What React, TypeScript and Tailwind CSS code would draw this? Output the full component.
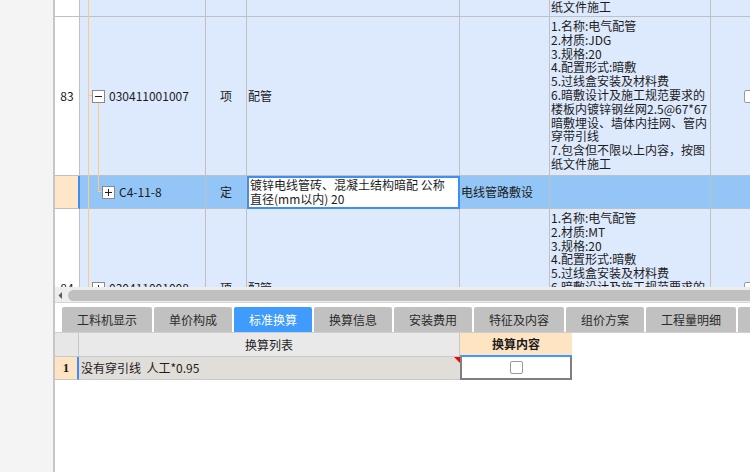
import React from 'react';

const line = 'border-[#c0c0c0]';

function TreeBox({ plus }: { plus?: boolean }) {
  return (
    <span className="relative w-[13px] h-[13px] shrink-0 border border-[#8a8a8a] bg-white">
      <span className="absolute left-[2px] right-[2px] top-[5px] h-px bg-[#222]" />
      {plus && <span className="absolute top-[2px] bottom-[2px] left-[5px] w-px bg-[#222]" />}
    </span>
  );
}

function Check() {
  return <span className="w-[13px] h-[13px] shrink-0 border border-[#9a9a9a] rounded-[2px] bg-white" />;
}

const row83 = [
  '1.名称:电气配管',
  '2.材质:JDG',
  '3.规格:20',
  '4.配置形式:暗敷',
  '5.过线盒安装及材料费',
  '6.暗敷设计及施工规范要求的',
  '楼板内镀锌钢丝网2.5@67*67',
  '暗敷埋设、墙体内挂网、管内',
  '穿带引线',
  '7.包含但不限以上内容，按图',
  '纸文件施工',
];

// only the part above the scrollbar is visible
const row84 = [
  '1.名称:电气配管',
  '2.材质:MT',
  '3.规格:20',
  '4.配置形式:暗敷',
  '5.过线盒安装及材料费',
  '6.暗敷设计及施工规范要求的',
];

const tabs = [
  { name: '工料机显示', w: 'w-[90px]' },
  { name: '单价构成', w: 'w-[78px]' },
  { name: '标准换算', w: 'w-[78px]', active: true },
  { name: '换算信息', w: 'w-[78px]' },
  { name: '安装费用', w: 'w-[78px]' },
  { name: '特征及内容', w: 'w-[90px]' },
  { name: '组价方案', w: 'w-[78px]' },
  { name: '工程量明细', w: 'w-[90px]' },
  { name: '', w: 'w-[40px]' },
];

function Features({ lines }: { lines: string[] }) {
  return (
    <div className="pl-[1px] pt-[2px] leading-[13.8px] whitespace-nowrap overflow-hidden">
      {lines.map((l, i) => (
        <div key={i}>{l}</div>
      ))}
    </div>
  );
}

export default function App() {
  const cell = `border-r border-b ${line}`;
  return (
    <div className="w-[750px] h-[472px] flex bg-white overflow-hidden text-[12px] text-[#1c1c1c] font-['Noto_Sans_CJK_SC','Liberation_Sans',sans-serif]">
      <div className="w-[55px] shrink-0 bg-[#f4f4f4] border-r-2 border-[#c6c6c6]" />

      <div className="flex-1 min-w-0 flex flex-col">
        {/* top grid */}
        <div className="h-[287px] overflow-hidden">
          <div className="grid grid-cols-[25px_126px_41px_213px_90px_161px_1fr] grid-rows-[17px_159px_33px_159px] bg-[#dde9fd]">
            {/* row 82 (tail) */}
            <div className={`bg-white ${cell}`} />
            <div className={`relative ${cell}`}>
              <span className="absolute left-[8px] top-0 bottom-[-1px] w-px bg-[#ffc97f]" />
            </div>
            <div className={cell} />
            <div className={cell} />
            <div className={cell} />
            <div className={`flex items-end pl-[1px] pb-[2px] leading-[13.8px] overflow-hidden ${cell}`}>纸文件施工</div>
            <div className={cell} />

            {/* row 83 */}
            <div className={`bg-white flex items-center justify-center ${cell}`}>83</div>
            <div className={`relative flex items-center pl-[12px] ${cell}`}>
              <span className="absolute left-[8px] top-0 bottom-[-1px] w-px bg-[#ffc97f]" />
              <span className="absolute left-[8px] w-[4px] top-[78px] h-px bg-[#ffc97f]" />
              <span className="absolute left-[18px] top-[85px] bottom-[-1px] w-px bg-[#ffc97f]" />
              <TreeBox />
              <span className="ml-[4px]">030411001007</span>
            </div>
            <div className={`flex items-center justify-center ${cell}`}>项</div>
            <div className={`flex items-center pl-[1px] ${cell}`}>配管</div>
            <div className={cell} />
            <div className={cell}>
              <Features lines={row83} />
            </div>
            <div className={`flex items-center pl-[33px] ${cell}`}>
              <Check />
            </div>

            {/* row C4-11-8 (selected) */}
            <div className={`bg-[#ffe6c8] border-b ${line} border-r-2 border-r-[#3b8cf3]`} />
            <div className={`relative flex items-center pl-[22px] bg-[#93c6f6] ${cell}`}>
              <span className="absolute left-[8px] top-0 bottom-[-1px] w-px bg-[#ffc97f]" />
              <span className="absolute left-[18px] top-0 h-[15px] w-px bg-[#ffc97f]" />
              <span className="absolute left-[18px] top-[15px] w-[4px] h-px bg-[#ffc97f]" />
              <TreeBox plus />
              <span className="ml-[4px]">C4-11-8</span>
            </div>
            <div className={`flex items-center justify-center bg-[#93c6f6] ${cell}`}>定</div>
            <div className="bg-white border-2 border-[#3d8ef5] pl-[1px] leading-[14px] whitespace-nowrap overflow-hidden">
              <div>镀锌电线管砖、混凝土结构暗配 公称</div>
              <div>直径(mm以内) 20</div>
            </div>
            <div className={`flex items-center pl-[1px] bg-[#93c6f6] whitespace-nowrap ${cell}`}>电线管路敷设</div>
            <div className={`bg-[#93c6f6] ${cell}`} />
            <div className={`bg-[#93c6f6] ${cell}`} />

            {/* row 84 */}
            <div className={`bg-white flex items-center justify-center ${cell}`}>84</div>
            <div className={`relative flex items-center pl-[12px] ${cell}`}>
              <span className="absolute left-[8px] top-0 h-[79px] w-px bg-[#ffc97f]" />
              <span className="absolute left-[8px] w-[4px] top-[79px] h-px bg-[#ffc97f]" />
              <TreeBox plus />
              <span className="ml-[4px]">030411001008</span>
            </div>
            <div className={`flex items-center justify-center ${cell}`}>项</div>
            <div className={`flex items-center pl-[1px] ${cell}`}>配管</div>
            <div className={cell} />
            <div className={cell}>
              <Features lines={row84} />
            </div>
            <div className={`flex items-center pl-[33px] ${cell}`}>
              <Check />
            </div>
          </div>
        </div>

        {/* horizontal scrollbar */}
        <div className="h-[16px] bg-[#ededed] flex items-start pt-[3px] border-b border-[#d6d6d6]">
          <svg width="13" height="11" viewBox="0 0 13 11" className="shrink-0">
            <path d="M7 2 L3.5 5.5 L7 9 Z" fill="#5a5a5a" />
          </svg>
          <div className="flex-1 h-[11px] rounded-full bg-[#c0c0c0] -mr-[20px]" />
        </div>

        {/* tabs */}
        <div className="flex gap-[2px] pl-[7px] pt-[4px] bg-white border-b border-[#cfcfcf] whitespace-nowrap overflow-hidden">
          {tabs.map((t, i) => (
            <div
              key={i}
              className={`${t.w} h-[25px] shrink-0 rounded-t-[2px] flex items-center justify-center text-[12px] leading-[14px] ${
                t.active ? 'bg-[#3f9bfd] text-white' : 'bg-[#c1c1c1] text-[#2b2b2b]'
              }`}
            >
              {t.name}
            </div>
          ))}
        </div>

        {/* standard conversion grid */}
        <div className="grid grid-cols-[24px_381px_112px] grid-rows-[24px_23px]">
          <div className="bg-[#e7e7e7] border-r border-b border-[#c8c8c8]" />
          <div className="bg-[#e9e9e9] border-r border-b border-[#c8c8c8] flex items-center justify-center">换算列表</div>
          <div className="bg-[#ffe4c4] border-b-2 border-[#3d9bff] flex items-center justify-center font-bold">换算内容</div>

          <div className="bg-[#ffe4c4] border-b border-[#c8c8c8] border-r-2 border-r-[#3d8ef5] flex items-center justify-center font-bold font-['Liberation_Serif',serif] text-[13px]">
            1
          </div>
          <div className="relative bg-[#e1ddd9] border-b border-[#c8c8c8] flex items-center pl-[2px] whitespace-nowrap">
            没有穿引线&nbsp;&nbsp;人工*0.95
            <span className="absolute right-0 top-0 w-0 h-0 border-t-[6px] border-l-[6px] border-t-[#ff0000] border-l-transparent" />
          </div>
          <div className="bg-white border-2 border-t-0 border-[#7f7f7f] flex items-center justify-center">
            <Check />
          </div>
        </div>
      </div>
    </div>
  );
}
